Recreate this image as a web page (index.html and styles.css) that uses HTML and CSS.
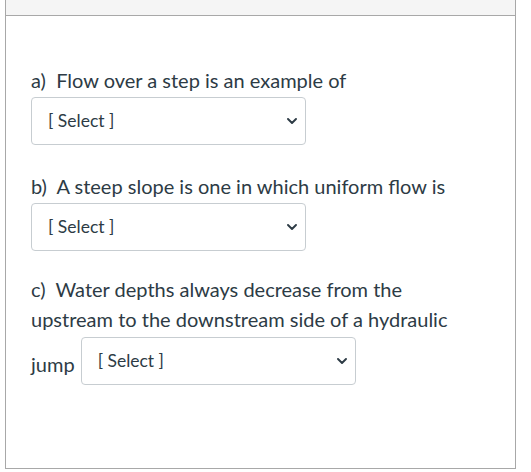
FILE: index.html
```html
<!DOCTYPE html>
<html lang="en">
<head>
<meta charset="utf-8">
<title>Quiz question</title>
<link rel="stylesheet" href="styles.css">
</head>
<body>
<div class="panel">
  <div class="panel-header"></div>
  <div class="panel-body">
    <div class="question">
      <p class="q-text">a)&nbsp; Flow over a step is an example of</p>
      <div class="select"><span class="select-label">[ Select ]</span><svg class="chev" viewBox="0 0 10 6" width="10" height="6"><path d="M1 1 L5 5 L9 1" fill="none" stroke="#2d3b45" stroke-width="1.9" stroke-linecap="round" stroke-linejoin="round"/></svg></div>
    </div>
    <div class="question">
      <p class="q-text">b)&nbsp; A steep slope is one in which uniform flow is</p>
      <div class="select"><span class="select-label">[ Select ]</span><svg class="chev" viewBox="0 0 10 6" width="10" height="6"><path d="M1 1 L5 5 L9 1" fill="none" stroke="#2d3b45" stroke-width="1.9" stroke-linecap="round" stroke-linejoin="round"/></svg></div>
    </div>
    <div class="question q-last">
      <p class="q-text">c)&nbsp; Water depths always decrease from the upstream to the downstream side of a hydraulic</p>
      <div class="inline-row">
        <span class="tail">jump</span>
        <div class="select"><span class="select-label">[ Select ]</span><svg class="chev" viewBox="0 0 10 6" width="10" height="6"><path d="M1 1 L5 5 L9 1" fill="none" stroke="#2d3b45" stroke-width="1.9" stroke-linecap="round" stroke-linejoin="round"/></svg></div>
      </div>
    </div>
  </div>
</div>
</body>
</html>
```
FILE: styles.css
```css
html, body {
  margin: 0;
  padding: 0;
  background: #fff;
}
body {
  font-family: Lato, "Liberation Sans", sans-serif;
  color: #2d3b45;
}
.panel {
  margin-left: 5px;
  width: 511px;
  height: 469px;
  box-sizing: border-box;
  border-left: 1px solid #a8a8a8;
  border-right: 1px solid #a8a8a8;
  border-bottom: 1px solid #a8a8a8;
  display: flex;
  flex-direction: column;
}
.panel-header {
  height: 15px;
  background: #f5f5f5;
  border-bottom: 1px solid #a8a8a8;
}
.panel-body {
  padding: 49px 25px 0 25px;
  display: flex;
  flex-direction: column;
  gap: 26px;
}
.question {
  display: flex;
  flex-direction: column;
  gap: 2px;
}
.q-last {
  margin-top: -3px;
}
.q-last .inline-row {
  margin-top: 1px;
}
.q-text {
  margin: 0;
  font-size: 20px;
  line-height: 30px;
  width: 455px;
}
.select {
  width: 275px;
  height: 48px;
  box-sizing: border-box;
  border: 1px solid #c7cdd1;
  border-radius: 4px;
  background: #fff;
  display: flex;
  align-items: center;
  justify-content: space-between;
  padding: 0 8px 0 16px;
  font-size: 17.5px;
}
.select-label {
  margin-top: -2px;
}
.chev {
  display: block;
}
.inline-row {
  display: flex;
  align-items: center;
  gap: 6px;
}
.tail {
  font-size: 20px;
  line-height: 30px;
  padding-top: 6px;
}
```
